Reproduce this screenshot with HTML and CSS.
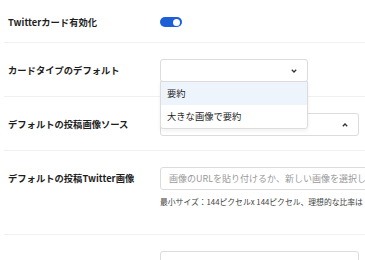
FILE: index.html
```html
<!DOCTYPE html>
<html lang="ja">
<head>
    <meta charset="UTF-8">
    <meta name="viewport" content="width=device-width, initial-scale=1.0">
    <title>Twitter設定</title>
    <link rel="stylesheet" href="styles.css">
</head>
<body>
    <main class="settings">
        <div class="row">
            <label class="label">Twitterカード有効化</label>
            <div class="field field-toggle">
                <span class="toggle"><span class="knob"></span></span>
            </div>
        </div>
        <div class="row">
            <label class="label">カードタイプのデフォルト</label>
            <div class="field">
                <div class="select select-short">
                    <span class="value"></span>
                    <svg class="chevron" width="6" height="4" viewBox="0 0 6 4"><polyline points="0.8,0.8 3,3 5.2,0.8" fill="none" stroke="#333" stroke-width="1.3"/></svg>
                    <ul class="menu">
                        <li class="option active">要約</li>
                        <li class="option">大きな画像で要約</li>
                    </ul>
                </div>
            </div>
        </div>
        <div class="row">
            <label class="label">デフォルトの投稿画像ソース</label>
            <div class="field">
                <div class="select select-long">
                    <span class="value"></span>
                    <svg class="chevron" width="6" height="4" viewBox="0 0 6 4"><polyline points="0.8,3.2 3,1 5.2,3.2" fill="none" stroke="#333" stroke-width="1.3"/></svg>
                </div>
            </div>
        </div>
        <div class="row">
            <label class="label">デフォルトの投稿Twitter画像</label>
            <div class="field">
                <input class="input input-wide" type="text" placeholder="画像のURLを貼り付けるか、新しい画像を選択してください">
                <p class="help">最小サイズ：144ピクセルx 144ピクセル、理想的な比率は</p>
            </div>
        </div>
        <div class="row">
            <label class="label"></label>
            <div class="field">
                <input class="input input-long" type="text">
            </div>
        </div>
    </main>
</body>
</html>
```

FILE: styles.css
```css
:root{
    --text: #1e1e1e;
    --muted: #9a9a9a;
    --border: #dcdcdc;
    --divider: #f0f0f0;
    --blue: #1c5fd9;
    --hover: #eef4fc;
}
*,*::before,*::after{
    box-sizing: border-box;
    margin: 0;
    padding: 0;
}
html,body{
    overflow: hidden;
}
body{
    background-color: #fff;
    font-family: "Noto Sans CJK JP", "Noto Sans", sans-serif;
    color: var(--text);
}
.settings{
    margin-left: 4px;
    width: 361px;
}
.row{
    display: flex;
    align-items: flex-start;
    padding: 16px 0 14px;
    border-bottom: 1px solid var(--divider);
}
.label{
    flex: none;
    width: 156px;
    padding-left: 4px;
    font-size: 9.3px;
    font-weight: 700;
    line-height: 23px;
    white-space: nowrap;
}
.field{
    display: flex;
    flex-direction: column;
    min-width: 0;
}
.field-toggle{
    height: 12px;
    justify-content: center;
}
.row:first-child .label{
    line-height: 12px;
}
.toggle{
    display: flex;
    justify-content: flex-end;
    align-items: center;
    width: 22px;
    height: 10px;
    padding: 0 2px;
    border-radius: 5px;
    background-color: var(--blue);
}
.knob{
    width: 7px;
    height: 7px;
    border-radius: 50%;
    background-color: #fff;
}
.select{
    position: relative;
    display: flex;
    align-items: center;
    justify-content: flex-end;
    height: 23px;
    padding: 0 10px;
    border: 1px solid var(--border);
    border-radius: 3px;
    background-color: #fff;
}
.select-short{
    width: 148px;
}
.select-long{
    width: 199px;
}
.chevron{
    display: block;
}
.menu{
    position: absolute;
    top: 21px;
    left: -1px;
    right: -1px;
    list-style: none;
    background-color: #fff;
    border: 1px solid var(--border);
    border-radius: 0 0 3px 3px;
    box-shadow: 0 2px 4px rgba(0, 0, 0, 0.06);
    z-index: 2;
}
.option{
    height: 23px;
    line-height: 22px;
    padding-left: 6px;
    font-size: 9.3px;
}
.option.active{
    background-color: var(--hover);
}
.input{
    height: 23px;
    padding: 0 8px;
    border: 1px solid var(--border);
    border-radius: 3px;
    font-family: inherit;
    font-size: 9px;
    color: var(--text);
    outline: none;
}
.input::placeholder{
    color: var(--muted);
}
.input-wide{
    width: 260px;
}
.input-long{
    width: 199px;
}
.help{
    margin: 6px 0 12px;
    font-size: 7.8px;
    line-height: 12px;
    color: #444;
    white-space: nowrap;
}
```
